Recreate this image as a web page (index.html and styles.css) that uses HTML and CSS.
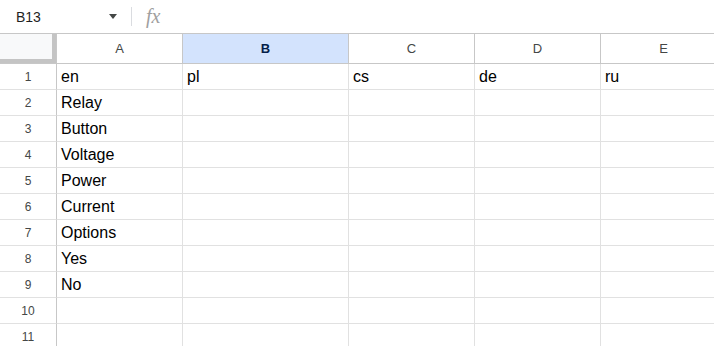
FILE: index.html
```html
<!DOCTYPE html>
<html lang="en">
<head>
  <meta charset="UTF-8" />
  <meta name="viewport" content="width=device-width, initial-scale=1.0" />
  <title>Sheet</title>
  <link rel="stylesheet" href="styles.css">
</head>
<body>

  <!-- Barra de fórmulas -->
  <div class="formula-bar">
    <div class="name-box">
      <span>B13</span>
      <span class="arrow"></span>
    </div>
    <span class="sep"></span>
    <span class="fx">fx</span>
  </div>

  <!-- Hoja -->
  <div class="sheet">
    <div class="corner"></div>
    <div class="col-head">A</div>
    <div class="col-head selected">B</div>
    <div class="col-head">C</div>
    <div class="col-head">D</div>
    <div class="col-head">E</div>

    <div class="row-head">1</div>
    <div class="cell">en</div><div class="cell">pl</div><div class="cell">cs</div><div class="cell">de</div><div class="cell">ru</div>

    <div class="row-head">2</div>
    <div class="cell">Relay</div><div class="cell"></div><div class="cell"></div><div class="cell"></div><div class="cell"></div>

    <div class="row-head">3</div>
    <div class="cell">Button</div><div class="cell"></div><div class="cell"></div><div class="cell"></div><div class="cell"></div>

    <div class="row-head">4</div>
    <div class="cell">Voltage</div><div class="cell"></div><div class="cell"></div><div class="cell"></div><div class="cell"></div>

    <div class="row-head">5</div>
    <div class="cell">Power</div><div class="cell"></div><div class="cell"></div><div class="cell"></div><div class="cell"></div>

    <div class="row-head">6</div>
    <div class="cell">Current</div><div class="cell"></div><div class="cell"></div><div class="cell"></div><div class="cell"></div>

    <div class="row-head">7</div>
    <div class="cell">Options</div><div class="cell"></div><div class="cell"></div><div class="cell"></div><div class="cell"></div>

    <div class="row-head">8</div>
    <div class="cell">Yes</div><div class="cell"></div><div class="cell"></div><div class="cell"></div><div class="cell"></div>

    <div class="row-head">9</div>
    <div class="cell">No</div><div class="cell"></div><div class="cell"></div><div class="cell"></div><div class="cell"></div>

    <div class="row-head">10</div>
    <div class="cell"></div><div class="cell"></div><div class="cell"></div><div class="cell"></div><div class="cell"></div>

    <div class="row-head">11</div>
    <div class="cell"></div><div class="cell"></div><div class="cell"></div><div class="cell"></div><div class="cell"></div>
  </div>

</body>
</html>
```
FILE: styles.css
```css
body {
  margin: 0;
  width: 714px;
  height: 346px;
  overflow: hidden;
  background: white;
  font-family: "Liberation Sans", Arial, sans-serif;
}

.formula-bar {
  display: flex;
  align-items: center;
  height: 34px;
  border-bottom: 1px solid #c7c7c7;
  box-sizing: border-box;
}

.name-box {
  display: flex;
  align-items: center;
  justify-content: space-between;
  width: 125px;
  box-sizing: border-box;
  padding: 0 8px 0 16px;
  font-size: 14px;
  color: #1f1f1f;
}

.arrow {
  width: 0;
  height: 0;
  border-left: 4.5px solid transparent;
  border-right: 4.5px solid transparent;
  border-top: 5px solid #444746;
}

.sep {
  width: 1px;
  height: 19px;
  margin-left: 6px;
  background-color: #dadce0;
}

.fx {
  margin-left: 14px;
  font-family: "Liberation Serif", "Times New Roman", serif;
  font-style: italic;
  font-size: 20px;
  color: #a0a0a0;
}

.sheet {
  display: grid;
  grid-template-columns: 57px 126px 166px 126px 126px 126px;
  grid-template-rows: 30px;
  grid-auto-rows: 26px;
}

.sheet > div {
  box-sizing: border-box;
  border-right: 1px solid #e1e1e1;
  border-bottom: 1px solid #e1e1e1;
}

.corner {
  background-color: #f8f9fa;
  box-shadow: inset -4px -4px 0 #c4c4c4;
  border-right-color: #c7c7c7 !important;
  border-bottom-color: #c7c7c7 !important;
}

.col-head {
  display: flex;
  align-items: center;
  justify-content: center;
  font-size: 13px;
  color: #444746;
  border-right-color: #c7c7c7 !important;
  border-bottom-color: #c7c7c7 !important;
}

.col-head.selected {
  background-color: #d3e3fd;
  color: #041e49;
  font-weight: bold;
}

.row-head {
  display: flex;
  align-items: center;
  justify-content: center;
  font-size: 12px;
  color: #444746;
  border-right-color: #c7c7c7 !important;
}

.cell {
  display: flex;
  align-items: flex-end;
  padding: 0 4px 3px;
  font-size: 16px;
  color: #000;
  white-space: nowrap;
  overflow: hidden;
}
```
